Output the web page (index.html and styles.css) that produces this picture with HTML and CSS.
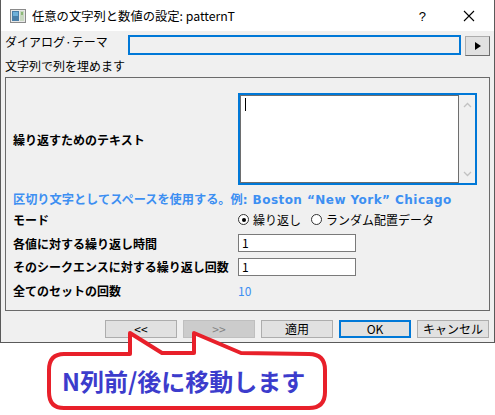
FILE: index.html
```html
<!DOCTYPE html>
<html lang="ja">
<head>
<meta charset="utf-8">
<link rel="stylesheet" href="styles.css">
</head>
<body>
<div class="window">
  <div class="titlebar">
    <svg class="appicon" width="16" height="14" viewBox="0 0 16 14">
      <rect x="0.5" y="0.5" width="15" height="13" fill="#e8e8e8" stroke="#8a8a8a"/>
      <rect x="2" y="2" width="7" height="10" fill="#4a7fa8"/>
      <rect x="3" y="3" width="5" height="4" fill="#6fb0d8"/>
      <rect x="10" y="2" width="4" height="10" fill="#c8d8c0"/>
      <rect x="11" y="3" width="2" height="3" fill="#8cb878"/>
    </svg>
    <span class="title">任意の文字列と数値の設定: patternT</span>
    <span class="tb-help">?</span>
    <svg class="tb-close" width="12" height="12" viewBox="0 0 12 12"><path d="M1 1L11 11M11 1L1 11" stroke="#000" stroke-width="1.1"/></svg>
  </div>
  <div class="body">
    <div class="theme-row">
      <span class="theme-label">ダイアログ·テーマ</span>
      <div class="theme-input"></div>
      <div class="theme-btn"><svg width="8" height="8" viewBox="0 0 8 8"><path d="M1 0L7 4L1 8Z" fill="#000"/></svg></div>
    </div>
    <div class="fill-label">文字列で列を埋めます</div>
    <div class="group">
      <div class="text-row">
        <span class="lbl">繰り返すためのテキスト</span>
        <div class="textarea">
          <div class="ta-inner"><span class="caret"></span></div>
          <div class="ta-scroll">
            <svg width="9" height="6" viewBox="0 0 9 6"><path d="M1 5L4.5 1.5L8 5" fill="none" stroke="#c2c2c2" stroke-width="1.3"/></svg>
            <svg width="9" height="6" viewBox="0 0 9 6"><path d="M1 1L4.5 4.5L8 1" fill="none" stroke="#c2c2c2" stroke-width="1.3"/></svg>
          </div>
        </div>
      </div>
      <div class="hint">区切り文字としてスペースを使用する。例<span class="latin">: Boston “New York” Chicago</span></div>
      <div class="row">
        <span class="lbl">モード</span>
        <div class="radios">
          <span class="radio on"></span><span class="rtext">繰り返し</span>
          <span class="radio"></span><span class="rtext">ランダム配置データ</span>
        </div>
      </div>
      <div class="row">
        <span class="lbl">各値に対する繰り返し時間</span>
        <div class="field">1</div>
      </div>
      <div class="row">
        <span class="lbl">そのシークエンスに対する繰り返し回数</span>
        <div class="field">1</div>
      </div>
      <div class="row">
        <span class="lbl">全てのセットの回数</span>
        <span class="count">10</span>
      </div>
    </div>
    <div class="buttons">
      <div class="btn">&lt;&lt;</div>
      <div class="btn disabled">&gt;&gt;</div>
      <div class="btn">適用</div>
      <div class="btn default">OK</div>
      <div class="btn">キャンセル</div>
    </div>
  </div>
</div>
<div class="callout">
  <svg class="callout-shape" width="295" height="90" viewBox="0 0 295 90">
    <path d="M62 24 L84 24 L84 3 L116 23 L148 23 L148 3 L195 23 L263 24 Q279 24 279 40 L279 62 Q279 78 263 78 L18 78 Q3 78 3 62 L3 40 Q3 24 18 24 Z" fill="#fff" stroke="#e8202a" stroke-width="4" stroke-linejoin="round"/>
  </svg>
  <span class="callout-text">N列前/後に移動します</span>
</div>
</body>
</html>
```
FILE: styles.css
```css
html, body {
  margin: 0;
  padding: 0;
  background: #ffffff;
}
body {
  width: 495px;
  height: 415px;
  position: relative;
  overflow: hidden;
  font-family: "Noto Sans CJK JP", "Noto Sans", sans-serif;
  font-size: 12px;
  color: #000;
}
.window {
  width: 493px;
  height: 342px;
  border-left: 1px solid #5a5a5a;
  border-right: 1px solid #5a5a5a;
  border-bottom: 1px solid #5a5a5a;
  display: flex;
  flex-direction: column;
}
.titlebar {
  height: 31px;
  background: #fff;
  display: flex;
  align-items: center;
  padding-left: 9px;
  box-sizing: border-box;
}
.appicon { margin-right: 6px; margin-top: 1px; }
.title {
  font-size: 12.3px;
  flex: 1;
  line-height: 1;
  margin-top: 1px;
}
.tb-help {
  font-family: "Liberation Sans", sans-serif;
  font-size: 13px;
  margin-right: 37px;
  margin-top: 1px;
}
.tb-close { margin-right: 19px; margin-top: 1px; }
.body {
  flex: 1;
  background: #f0f0f0;
  display: flex;
  flex-direction: column;
  padding: 3px 0 0 4px;
}
.theme-row {
  display: flex;
  align-items: flex-start;
  height: 24px;
}
.theme-label {
  width: 123px;
  line-height: 14px;
  margin-top: 1px;
}
.theme-input {
  width: 329px;
  height: 16px;
  border: 2px solid #0078d7;
  background: #f0f0f0;
  margin-top: 1px;
}
.theme-btn {
  width: 25px;
  height: 20px;
  margin-left: 4px;
  margin-top: 2px;
  background: #e1e1e1;
  border: 1px solid #adadad;
  border-right-color: #6e6e6e;
  border-bottom-color: #6e6e6e;
  box-sizing: border-box;
  display: flex;
  align-items: center;
  justify-content: center;
}
.fill-label {
  line-height: 14px;
  margin-top: 1px;
  height: 18px;
}
.group {
  width: 485px;
  height: 234px;
  border: 1px solid #6a6a6a;
  box-sizing: border-box;
  padding: 15px 0 0 7px;
  display: flex;
  flex-direction: column;
}
.lbl {
  font-weight: bold;
  font-size: 12px;
  width: 225px;
  flex: none;
  white-space: nowrap;
}
.text-row {
  display: flex;
  align-items: center;
  height: 92px;
}
.textarea {
  width: 239px;
  height: 92px;
  box-sizing: border-box;
  border: 2px solid #0078d7;
  display: flex;
  background: #f0f0f0;
}
.ta-inner {
  width: 219px;
  height: 88px;
  box-sizing: border-box;
  border: 1px solid #6e6e6e;
  background: #fff;
  padding: 2px 0 0 4px;
}
.caret {
  display: block;
  width: 1px;
  height: 13px;
  background: #000;
}
.ta-scroll {
  flex: 1;
  display: flex;
  flex-direction: column;
  align-items: center;
  justify-content: space-between;
  padding: 7px 0 6px;
}
.hint {
  margin-top: 6px;
  height: 17px;
  line-height: 17px;
  font-weight: bold;
  color: #3d8ff2;
  font-size: 12.2px;
  white-space: nowrap;
}
.hint .latin {
  font-family: "DejaVu Sans", sans-serif;
  font-size: 12px;
  letter-spacing: 0.45px;
}
.row {
  display: flex;
  align-items: center;
  height: 23.5px;
}
.radios {
  display: flex;
  align-items: center;
}
.radio {
  width: 11px;
  height: 11px;
  border: 1px solid #333;
  border-radius: 50%;
  background: #fff;
  box-sizing: border-box;
  position: relative;
  margin-right: 4px;
}
.radio.on::after {
  content: "";
  position: absolute;
  left: 2.5px;
  top: 2.5px;
  width: 4px;
  height: 4px;
  border-radius: 50%;
  background: #000;
}
.rtext { margin-right: 10px; }
.field {
  width: 118px;
  height: 18px;
  border: 1px solid #7a7a7a;
  background: #fff;
  box-sizing: border-box;
  padding-left: 3px;
  line-height: 16px;
}
.count {
  color: #3d8ff2;
  font-size: 12px;
}
.buttons {
  display: flex;
  gap: 6px;
  margin-top: 9px;
  padding-left: 100px;
}
.btn {
  width: 72px;
  height: 18px;
  box-sizing: border-box;
  border: 1px solid #adadad;
  background: #e1e1e1;
  display: flex;
  align-items: center;
  justify-content: center;
  font-size: 12px;
  line-height: 1;
}
.btn.disabled {
  background: #cccccc;
  border-color: #bfbfbf;
  color: #838383;
}
.btn.default {
  border: 2px solid #0078d7;
}
.callout {
  position: absolute;
  left: 46px;
  top: 330px;
  width: 295px;
  height: 90px;
}
.callout-shape {
  position: absolute;
  left: 0;
  top: 0;
}
.callout-text {
  position: absolute;
  left: 16px;
  top: 36px;
  font-family: "Noto Sans CJK JP", sans-serif;
  font-weight: bold;
  font-size: 24px;
  line-height: 30px;
  color: #3c3ccc;
  white-space: nowrap;
}
```
